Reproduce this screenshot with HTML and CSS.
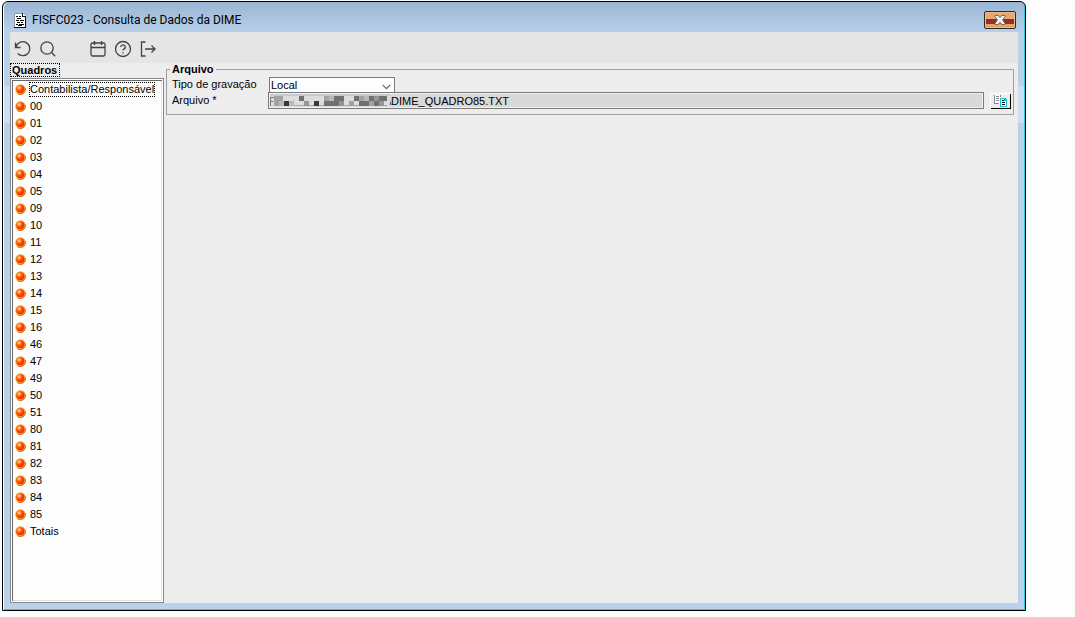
FILE: index.html
```html
<!DOCTYPE html>
<html lang="pt-BR">
<head>
<meta charset="utf-8">
<title>FISFC023 - Consulta de Dados da DIME</title>
<link rel="stylesheet" href="styles.css">
</head>
<body>
<svg class="defs" aria-hidden="true">
  <defs>
    <radialGradient id="glow" cx="36%" cy="32%" r="70%">
      <stop offset="0" stop-color="#fff8d0"/>
      <stop offset=".25" stop-color="#ff9a50"/>
      <stop offset=".5" stop-color="#ff4a10"/>
      <stop offset="1" stop-color="#f03000"/>
    </radialGradient>
    <symbol id="ball" viewBox="0 0 11 11">
      <circle cx="5.5" cy="5.5" r="5.2" fill="#f7a526"/>
      <path d="M10.300 4a5.200 5.200 0 0 1-7.500 6" fill="none" stroke="#b86a20" stroke-width=".8"/>
      <circle cx="5.300" cy="5.300" r="4" fill="url(#glow)"/>
    </symbol>
  </defs>
</svg>
<main class="window">
  <header class="titlebar">
    <svg class="app-icon" viewBox="0 0 12 15" shape-rendering="crispEdges" aria-hidden="true">
      <path d="M0 0h8l4 4v11H0z" fill="#fff"/>
      <path d="M11 4h1v11H0v-1h11zM8 0h1v3h3v1H8z" fill="#111"/>
      <path d="M0 0h8v1H0zM0 0h1v14H0z" fill="#999"/>
      <path d="M2 3h2v1H2zM5 3h2v1H5zM3 5h4v1H3zM2 7h3v1H2zM6 7h4v1H6zM3 9h3v1H3zM7 9h2v1H7zM2 11h2v1H2zM5 11h5v1H5zM4 12h4v1H4z" fill="#000"/>
    </svg>
    <h1 class="title">FISFC023 - Consulta de Dados da DIME</h1>
    <button class="close" type="button" aria-label="Fechar">
      <svg viewBox="0 0 12 10" aria-hidden="true">
        <path d="M1 .5h3.500L6 2.700 7.500 .5H11v1.300L8.500 5 11 8.200v1.300H7.500L6 7.300 4.500 9.500H1V8.200L3.500 5 1 1.800z" fill="#f4f4f4" stroke="#5c5555" stroke-width=".8"/>
      </svg>
    </button>
  </header>
  <div class="client">
    <nav class="toolbar" aria-label="Ferramentas">
      <button class="tool" type="button" aria-label="Limpar">
        <svg viewBox="0 0 18 18"><path d="M1.500 2.500v5h5M2 7a7 7 0 1 1 1.700 6.500"/></svg>
      </button>
      <button class="tool" type="button" aria-label="Pesquisar">
        <svg viewBox="0 0 18 18"><circle cx="8" cy="8" r="6.200"/><path d="M12.500 12.500l3.700 3.700"/></svg>
      </button>
      <button class="tool tool-group" type="button" aria-label="Calendário">
        <svg viewBox="0 0 18 18"><rect x="2" y="3" width="14" height="13" rx="1.500"/><path d="M2 7.500h14M5.500 1v4M12.500 1v4"/></svg>
      </button>
      <button class="tool" type="button" aria-label="Ajuda">
        <svg viewBox="0 0 18 18"><circle cx="9" cy="9" r="7.500"/><path d="M6.700 7a2.300 2.100 0 1 1 3.400 1.900c-.8.400-1.100.8-1.100 1.700M9 12.200v1.300"/></svg>
      </button>
      <button class="tool" type="button" aria-label="Sair">
        <svg viewBox="0 0 18 18"><path d="M6.500 2h-4v14h4M6 9h10M12.500 5.500L16 9l-3.500 3.500"/></svg>
      </button>
    </nav>
    <div class="panes">
      <section class="sidebar">
        <h2 class="heading">Quadros</h2>
        <ul class="tree">
          <li><button class="node selected" type="button"><svg><use href="#ball"/></svg><span>Contabilista/Responsável</span></button></li>
          <li><button class="node" type="button"><svg><use href="#ball"/></svg><span>00</span></button></li>
          <li><button class="node" type="button"><svg><use href="#ball"/></svg><span>01</span></button></li>
          <li><button class="node" type="button"><svg><use href="#ball"/></svg><span>02</span></button></li>
          <li><button class="node" type="button"><svg><use href="#ball"/></svg><span>03</span></button></li>
          <li><button class="node" type="button"><svg><use href="#ball"/></svg><span>04</span></button></li>
          <li><button class="node" type="button"><svg><use href="#ball"/></svg><span>05</span></button></li>
          <li><button class="node" type="button"><svg><use href="#ball"/></svg><span>09</span></button></li>
          <li><button class="node" type="button"><svg><use href="#ball"/></svg><span>10</span></button></li>
          <li><button class="node" type="button"><svg><use href="#ball"/></svg><span>11</span></button></li>
          <li><button class="node" type="button"><svg><use href="#ball"/></svg><span>12</span></button></li>
          <li><button class="node" type="button"><svg><use href="#ball"/></svg><span>13</span></button></li>
          <li><button class="node" type="button"><svg><use href="#ball"/></svg><span>14</span></button></li>
          <li><button class="node" type="button"><svg><use href="#ball"/></svg><span>15</span></button></li>
          <li><button class="node" type="button"><svg><use href="#ball"/></svg><span>16</span></button></li>
          <li><button class="node" type="button"><svg><use href="#ball"/></svg><span>46</span></button></li>
          <li><button class="node" type="button"><svg><use href="#ball"/></svg><span>47</span></button></li>
          <li><button class="node" type="button"><svg><use href="#ball"/></svg><span>49</span></button></li>
          <li><button class="node" type="button"><svg><use href="#ball"/></svg><span>50</span></button></li>
          <li><button class="node" type="button"><svg><use href="#ball"/></svg><span>51</span></button></li>
          <li><button class="node" type="button"><svg><use href="#ball"/></svg><span>80</span></button></li>
          <li><button class="node" type="button"><svg><use href="#ball"/></svg><span>81</span></button></li>
          <li><button class="node" type="button"><svg><use href="#ball"/></svg><span>82</span></button></li>
          <li><button class="node" type="button"><svg><use href="#ball"/></svg><span>83</span></button></li>
          <li><button class="node" type="button"><svg><use href="#ball"/></svg><span>84</span></button></li>
          <li><button class="node" type="button"><svg><use href="#ball"/></svg><span>85</span></button></li>
          <li><button class="node" type="button"><svg><use href="#ball"/></svg><span>Totais</span></button></li>
        </ul>
      </section>
      <section class="content">
        <fieldset class="group">
          <legend>Arquivo</legend>
          <div class="fields">
            <label for="tipo">Tipo de gravação</label>
            <div class="select">
              <select id="tipo"><option>Local</option></select>
              <svg class="chevron" viewBox="0 0 9 6" aria-hidden="true"><path d="M.7 .8l3.800 3.800L8.300 .8"/></svg>
            </div>
            <label for="arquivo">Arquivo *</label>
            <div class="file">
              <input id="arquivo" type="text" value="\DIME_QUADRO85.TXT" readonly>
              <svg class="mask" viewBox="0 0 120 13" shape-rendering="crispEdges" aria-hidden="true">
                <path d="M0 0h120v13H0z" fill="#dcdcdc"/>
                <path d="M0 0h120v2H0z" fill="#c5cbd2"/>
                <path d="M0 12V3h4v1H1v3h2v1H1v4z" fill="#777"/>
                <path d="M17 11h100v1H17z" fill="#aaa"/>
                <path d="M4 2h9v5H9v5H4zM54 2h5v5h-5zM89 2h5v5h-5zM79 7h5v5h-5zM99 7h5v5h-5z" fill="#9fa3a3"/>
                <path d="M9 7h5v5H9zM19 7h5v5h-5zM59 2h5v5h-5zM94 2h5v5h-5z" fill="#b8baba"/>
                <path d="M29 2h5v5h-5zM54 7h10v5H54zM64 2h10v5h-5v5h-5zM84 2h5v5h-5zM89 7h10v5H89zM99 2h5v5h-5zM104 7h5v5h-5zM109 2h8v5h-8z" fill="#707070"/>
                <path d="M34 7h5v5h-5zM69 7h5v5h-5zM104 2h5v5h-5zM109 7h5v5h-5z" fill="#949696"/>
                <path d="M14 7h5v5h-5zM44 7h5v5h-5z" fill="#393939"/>
              </svg>
            </div>
            <button class="browse" type="button" aria-label="Procurar arquivo">
              <svg viewBox="0 0 15 13" shape-rendering="crispEdges" aria-hidden="true">
                <path d="M1 1h7v9H1z" fill="#fff"/>
                <path d="M1 1h1v8h4v1H1zM3 2h3v1H3zM3 4h3v1H3zM3 6h3v1H3zM7 1h1v2H7z" fill="#8c8c8c"/>
                <path d="M7 4h5l2 2v7H7z" fill="#21bcd3"/>
                <path d="M8 5h3v2h2v5H8z" fill="#fff"/>
                <path d="M9 6h2v1H9zM9 8h3v1H9zM9 10h3v1H9z" fill="#000"/>
              </svg>
            </button>
          </div>
        </fieldset>
      </section>
    </div>
  </div>
</main>
</body>
</html>
```

FILE: styles.css
```css
* { box-sizing: border-box; }
body {
  display: flex;
  min-height: 100vh;
  margin: 0;
  padding: 1px 49px 6px 2px;
  background: #fdfdfd;
  color: #000;
  font-family: "Liberation Sans", Arial, sans-serif;
  font-size: 11px;
}
button, input, select { font: inherit; color: inherit; }
button { padding: 0; border: 0; background: none; }
.defs { position: absolute; width: 0; height: 0; }

.window {
  display: flex;
  flex: 1;
  flex-direction: column;
  min-width: 0;
  padding: 0 7px 7px;
  border: 1px solid #000;
  border-radius: 6px 6px 0 0;
  background: linear-gradient(#9ab6d4, #b9d1ea 31px, #b9d1ea 84px, #cbdff2 84px, #cbdff2 121px, #b9d1ea 121px);
  box-shadow: inset 1px 0 #fff, inset -1px -1px #35c4e4;
}
.titlebar {
  display: flex;
  align-items: center;
  height: 30px;
  padding: 6px 2px 0 3px;
}
.app-icon { width: 12px; height: 15px; margin: 0 6px 0 1px; }
.title {
  flex: 1;
  margin: 0;
  font: 400 12px/18px Roboto, "Noto Sans", sans-serif;
}
.close {
  display: flex;
  align-items: center;
  justify-content: center;
  width: 32px;
  height: 18px;
  border: 1px solid #2e2926;
  border-radius: 2px;
  background: linear-gradient(#e8a870 7px, #952d20 7px, #952d20 12px, #e3a067 12px);
  box-shadow: inset 0 0 0 1px #edbd91;
}
.close svg { width: 12px; height: 10px; }

.client {
  display: flex;
  flex: 1;
  flex-direction: column;
  background: #ededed;
}
.toolbar {
  display: flex;
  align-items: center;
  gap: 7px;
  height: 31px;
  padding: 3px 4px 0;
  background: #e5e5e5;
}
.tool { display: flex; }
.tool svg {
  width: 18px;
  height: 18px;
  fill: none;
  stroke: #424242;
  stroke-width: 1.3;
}
.tool-group { margin-left: 25px; }
.panes { display: flex; flex: 1; }

.sidebar {
  display: flex;
  flex-direction: column;
  width: 154px;
}
.heading {
  align-self: flex-start;
  margin: 0 0 1px;
  padding: 0 2px 0 1px;
  border: 1px dotted #000;
  font-size: 11px;
  line-height: 12px;
}
.tree {
  flex: 1;
  margin: 0;
  padding: 2px 0 0 2px;
  border: 1px solid #85878d;
  background: #fdfdfd;
  box-shadow: inset 1px 1px #fff, inset -1px -1px #fff, inset 2px 2px #696969, inset -2px -2px #e1e2e4;
  list-style: none;
}
.node {
  display: flex;
  align-items: center;
  gap: 3px;
  width: 100%;
  height: 17px;
  padding-left: 2px;
  line-height: 13px;
}
.node svg { width: 11px; height: 11px; }
.node span { border: 1px solid transparent; white-space: nowrap; }
.node.selected span { border: 1px dotted #000; }

.content { flex: 1; min-width: 0; padding: 0 4px 0 2px; }
.group {
  min-width: 0;
  margin: 0;
  padding: 1px 2px 5px 5px;
  border: 1px solid #a0a0a0;
}
.group legend {
  margin-left: -2px;
  padding: 0 2px;
  font-weight: 700;
  line-height: 13px;
}
.fields {
  display: grid;
  grid-template-columns: 96px 1fr 21px;
  align-items: center;
}
.fields label { line-height: 15px; }
.select {
  position: relative;
  grid-column: 2 / 4;
  width: 126px;
  height: 15px;
  margin-left: 1px;
}
.select select {
  width: 100%;
  height: 16px;
  padding: 0 1px;
  border: 1px solid #7a7a7a;
  border-radius: 0;
  background: #fdfdfd;
  appearance: none;
}
.chevron {
  position: absolute;
  top: 7px;
  right: 4px;
  width: 9px;
  height: 6px;
  fill: none;
  stroke: #666;
  stroke-width: 1.2;
}
.file { position: relative; margin-right: 6px; }
.file input {
  display: block;
  width: 100%;
  height: 17px;
  padding: 0 0 0 119px;
  border: 1px solid #7a7a7a;
  background: #d9d9d9;
  box-shadow: inset 0 0 0 1px #f0f0f0;
}
.mask {
  position: absolute;
  top: 2px;
  left: 2px;
  width: 120px;
  height: 13px;
}
.browse {
  display: flex;
  align-items: center;
  justify-content: center;
  height: 16px;
  background: #ededed;
  box-shadow: inset 1px 1px #fff, inset -1px -1px #000;
}
.browse svg { width: 15px; height: 13px; }
```
